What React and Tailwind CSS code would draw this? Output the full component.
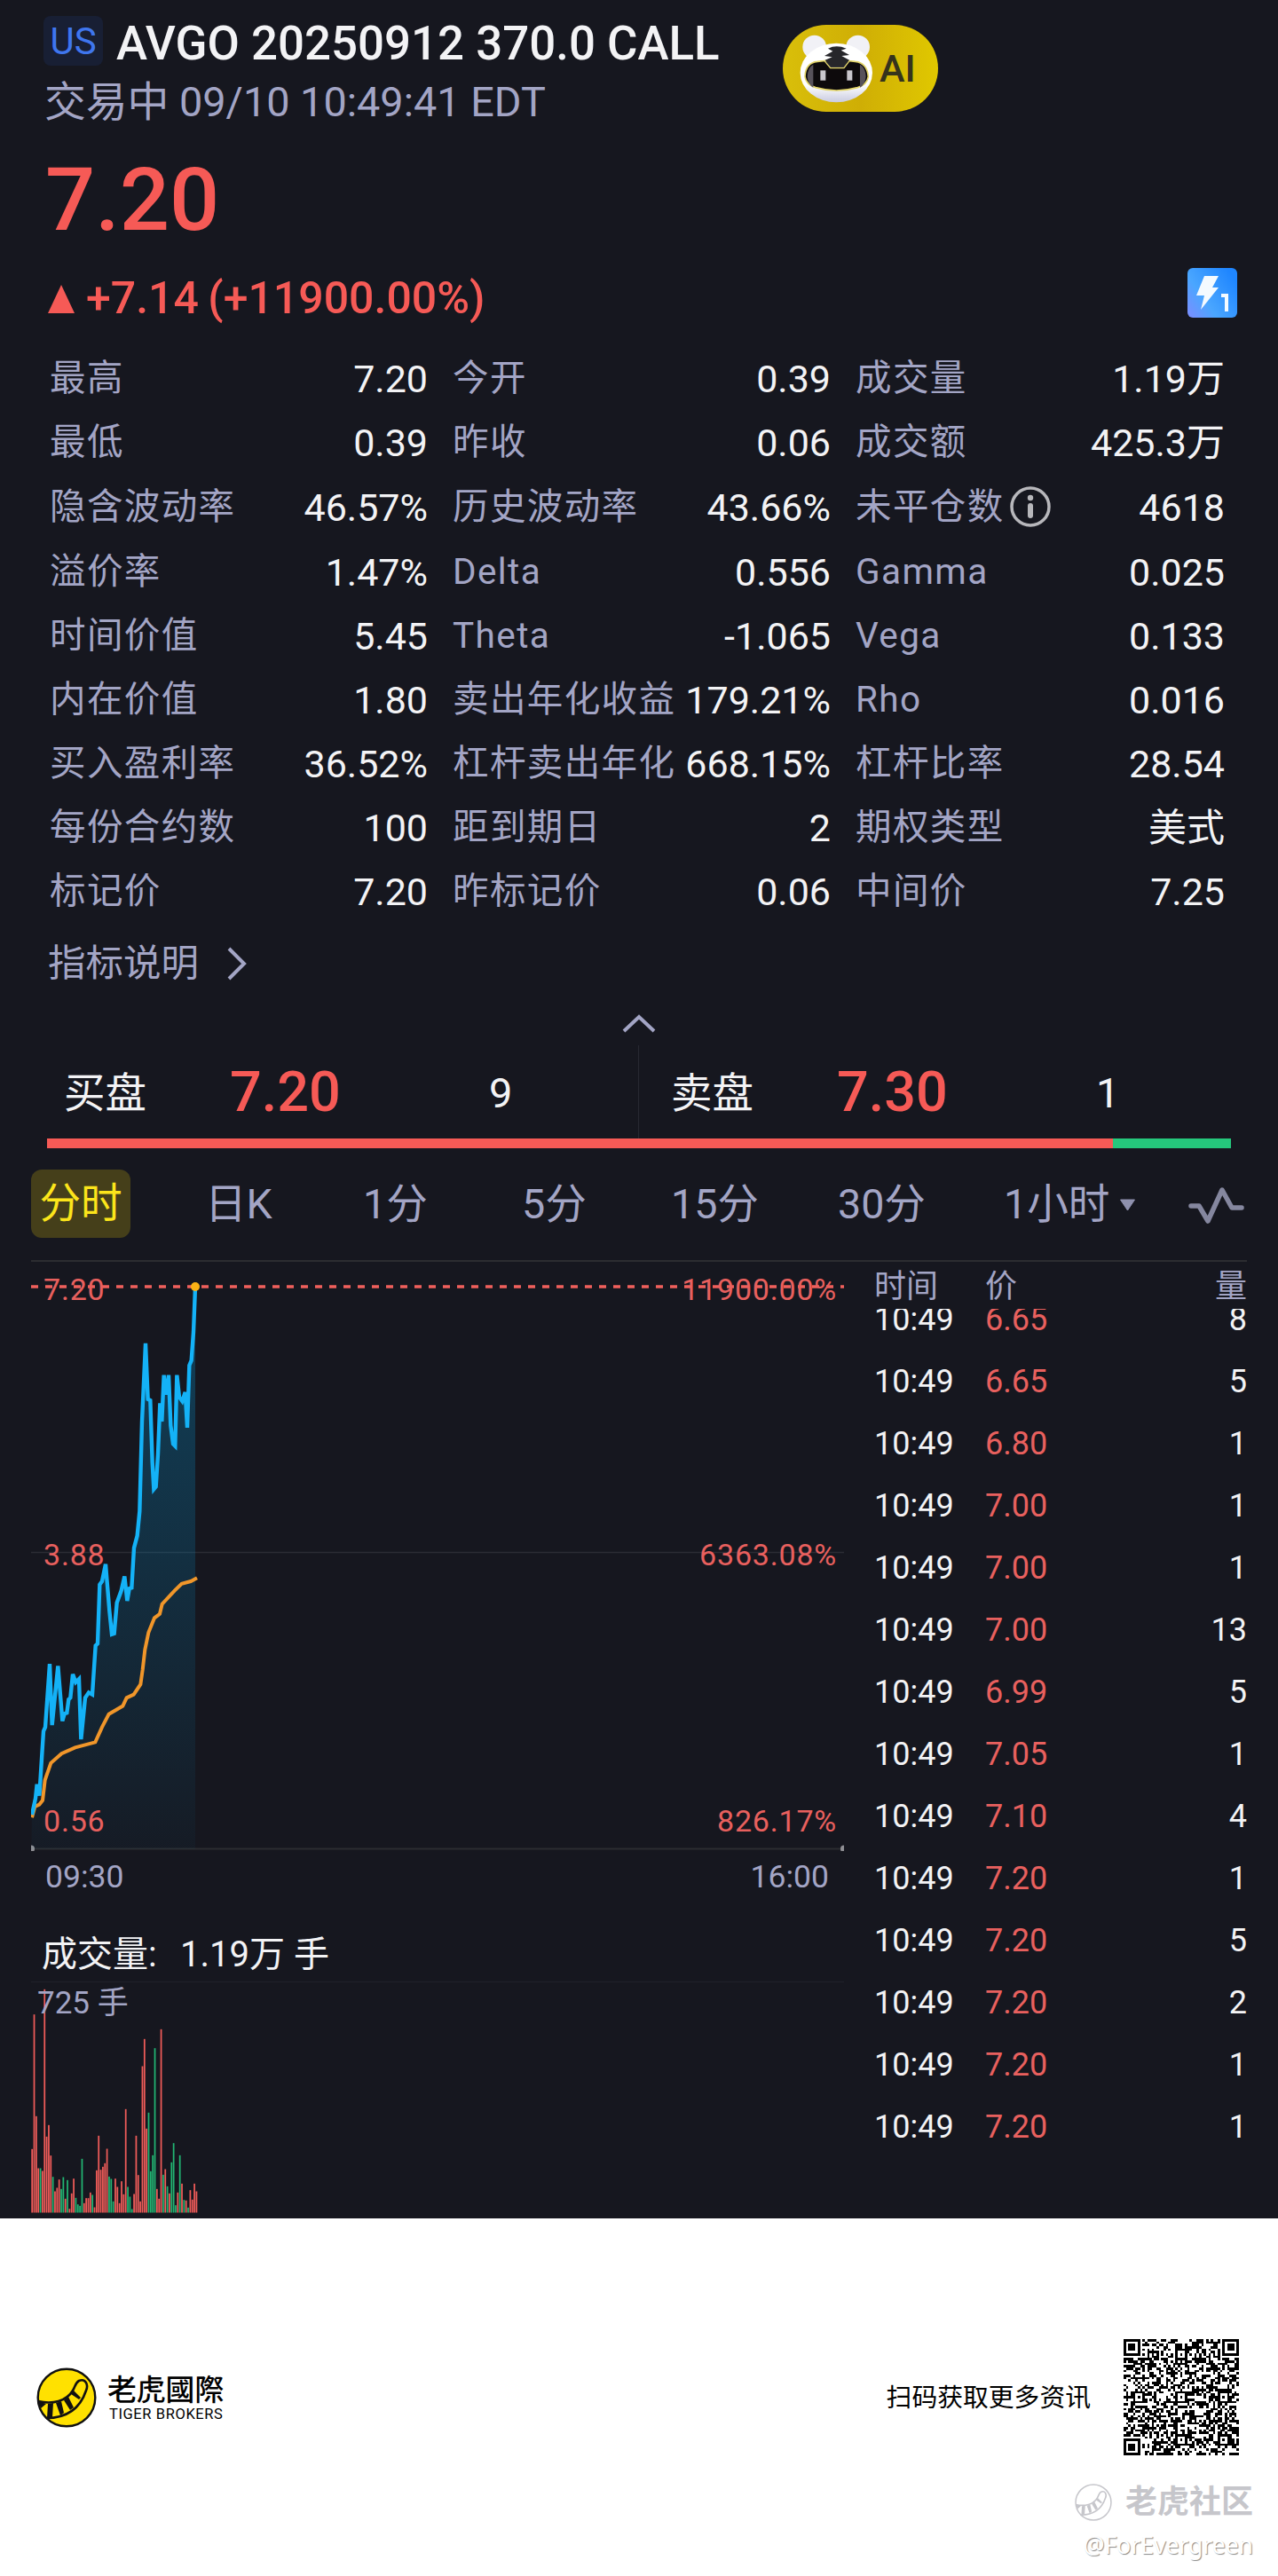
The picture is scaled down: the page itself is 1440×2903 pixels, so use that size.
const STATS = [
  [['最高', '7.20'], ['今开', '0.39'], ['成交量', '1.19万']],
  [['最低', '0.39'], ['昨收', '0.06'], ['成交额', '425.3万']],
  [['隐含波动率', '46.57%'], ['历史波动率', '43.66%'], ['未平仓数', '4618', true]],
  [['溢价率', '1.47%'], ['Delta', '0.556'], ['Gamma', '0.025']],
  [['时间价值', '5.45'], ['Theta', '-1.065'], ['Vega', '0.133']],
  [['内在价值', '1.80'], ['卖出年化收益', '179.21%'], ['Rho', '0.016']],
  [['买入盈利率', '36.52%'], ['杠杆卖出年化', '668.15%'], ['杠杆比率', '28.54']],
  [['每份合约数', '100'], ['距到期日', '2'], ['期权类型', '美式']],
  [['标记价', '7.20'], ['昨标记价', '0.06'], ['中间价', '7.25']],
];

const TRADES = [
  ['6.65', 8], ['6.65', 5], ['6.80', 1], ['7.00', 1], ['7.00', 1], ['7.00', 13], ['6.99', 5],
  ['7.05', 1], ['7.10', 4], ['7.20', 1], ['7.20', 5], ['7.20', 2], ['7.20', 1], ['7.20', 1],
];

// chart space: x is 1/3 px, y is 1/2.178 px
const PRICE =
  '108,1405 120,1365 125,1330 133,1358 147,1200 153,1190 168,1035 176,1185 196,1040 211,1175 218,1157 226,1155 232,1122 238,1118 246,1060 256,1080 267,1072 274,1220 288,1118 300,1105 312,1110 323,990 330,985 337,840 345,832 357,790 370,905 378,962 386,960 395,885 410,855 421,820 430,880 437,850 445,848 453,750 464,720 472,660 480,440 492,248 500,385 508,388 515,540 520,606 527,600 534,520 541,395 547,440 554,326 560,370 564,370 570,326 577,450 585,495 592,500 598,326 606,380 616,390 626,368 633,455 640,302 647,290 654,220 660,110';
const AVERAGE =
  '108,1412 118,1385 133,1380 144,1370 152,1320 172,1278 208,1255 254,1240 322,1227 345,1190 368,1158 415,1138 428,1118 452,1110 475,1085 482,1050 490,1000 502,958 522,922 540,912 548,888 590,855 614,838 645,832 666,824';

// one bar a minute, r = up, g = down
const VOLUME =
  'r215 r670 r326 r150 g150 r141 r755 r257 r296 r193 g121 r72 r84 r112 g80 g120 r47 g110 r13 r65 r115 g50 g28 g23 g182 r32 r49 r49 r68 g60 r18 r143 r260 r145 r155 r167 r216 g122 g114 g38 r115 r87 r32 r106 r62 r350 g87 g54 g12 r63 r260 r127 r38 r495 r587 r284 g338 g140 g194 g556 r80 r47 r620 g128 r147 g89 r65 g170 g235 g25 r68 g194 r98 g43 r41 g17 r76 r44 r98 r72'.split(' ');

const QR_SIZE = 49;

function buildQr() {
  let seed = 20250912;
  const rand = () => {
    seed = (seed * 1103515245 + 12345) % 2147483648;
    return seed / 2147483648;
  };
  const square = (x, y, cx, cy, max) => {
    const d = Math.max(Math.abs(x - cx), Math.abs(y - cy));
    return d <= max ? d : -1;
  };
  let d = '';
  for (let y = 0; y < QR_SIZE; y++) {
    for (let x = 0; x < QR_SIZE; x++) {
      let on = rand() > 0.5;
      if (x === 6 || y === 6) on = (x + y) % 2 === 0;
      for (const [cx, cy] of [[24, 6], [6, 24], [24, 24], [42, 24], [24, 42], [42, 42]]) {
        const r = square(x, y, cx, cy, 2);
        if (r >= 0) on = r !== 1;
      }
      for (const [cx, cy] of [[3, 3], [45, 3], [3, 45]]) {
        const r = square(x, y, cx, cy, 4);
        if (r >= 0) on = r !== 2 && r !== 4;
      }
      if (on) d += `M${x} ${y}h1v1h-1z`;
    }
  }
  return d;
}

const QR_PATH = buildQr();

function TigerBot() {
  return (
    <svg className="w-[84px] h-[78px]" viewBox="0 0 252 234">
      <defs>
        <linearGradient id="bot" x1="0" y1="0" x2="0" y2="1">
          <stop offset="0.7" stopColor="#ffffff" />
          <stop offset="1" stopColor="#c9cbe0" />
        </linearGradient>
      </defs>
      <circle cx="50" cy="45" r="40" fill="#f1f1f6" />
      <circle cx="197" cy="45" r="40" fill="#f1f1f6" />
      <ellipse cx="124" cy="132" rx="122" ry="100" fill="url(#bot)" />
      <path d="M18 145 Q20 98 60 94 Q124 86 188 94 Q228 98 232 145 Q228 172 196 182 Q124 202 54 182 Q22 172 18 145z" fill="#0d0a0c" stroke="#e3d56a" strokeWidth="5" />
      <path d="M26 144q2-30 20-40v78q-18-10-20-38zM224 144q-2-30-20-40v78q18-10 20-38z" fill="#57525a" />
      <path d="M84 92 L104 116 H150 L168 92z" fill="#35353a" stroke="#e3d56a" strokeWidth="4" />
      <path d="M96 50q28-14 62 0l-18 6 28 16-26 3 26 14-20 22h-42l-20-22 24-10-26-4 28-16z" fill="#26262a" />
      <rect x="70" y="124" width="18" height="34" fill="#c9c7cd" />
      <rect x="160" y="124" width="18" height="34" fill="#c9c7cd" />
    </svg>
  );
}

function Header() {
  return (
    <div className="flex h-[390px] pl-[49px]">
      <div className="w-[833px] shrink-0 flex flex-col">
        <div className="mt-[18px] h-[56px] flex items-center">
          <span className="w-[67px] h-[56px] rounded-[8px] bg-[#181f34] text-[#3f76ee] text-[42px] leading-[58px] text-center">US</span>
          <span className="ml-[15px] pt-[6px] text-[52.8px] leading-[56px] font-medium text-[#f3f3f5] whitespace-nowrap">AVGO 20250912 370.0 CALL</span>
        </div>
        <p className="mt-[11px] ml-[1px] text-[46.8px] leading-[60px] text-[#a3a5c5]">交易中 09/10 10:49:41 EDT</p>
        <p className="mt-[30px] ml-[2px] text-[99px] leading-[100px] font-medium text-[#f65a56]">7.20</p>
        <div className="mt-[33px] ml-[5px] flex items-center h-[56px]">
          <svg className="w-[30px] h-[32px] mt-[2px]" viewBox="0 0 30 32"><path d="M15 0 30 32H0z" fill="#f65a56" /></svg>
          <span className="ml-[13px] text-[50px] leading-[56px] font-medium text-[#f65a56] whitespace-nowrap [word-spacing:-2px]">+7.14 (+11900.00%)</span>
        </div>
      </div>
      <div className="grow flex flex-col justify-between pr-[46px] pb-[32px] pt-[28px]">
        <div className="w-[175px] h-[98px] rounded-[49px] bg-linear-to-r from-[#d9bf0a] via-[#cfae05] to-[#e0c800] flex items-center pl-[19px]">
          <TigerBot />
          <span className="ml-[6px] text-[43px] leading-[48px] font-medium text-[#35331c]">AI</span>
        </div>
        <svg className="self-end w-[56px] h-[56px]" viewBox="0 0 56 56">
          <defs>
            <linearGradient id="l1" x1="0" y1="1" x2="1" y2="0.3">
              <stop offset="0" stopColor="#7d8dff" />
              <stop offset="0.4" stopColor="#4aa6ff" />
              <stop offset="1" stopColor="#1f86ff" />
            </linearGradient>
          </defs>
          <rect width="56" height="56" rx="6" fill="url(#l1)" />
          <path d="M19 9H35L28 22H35L15 47L19 31H10z" fill="#f4faff" />
          <path d="M38 29h8v20h-4V33h-4z" fill="#f4faff" />
        </svg>
      </div>
    </div>
  );
}

function Stat({ item, last }) {
  const [label, value, info] = item;
  return (
    <div className={`flex items-center justify-between ${last ? 'w-[416px]' : 'w-[426px]'}`}>
      <span className="flex items-center text-[40.5px] leading-[70px] tracking-[1.4px] text-[#a3a5c5] whitespace-nowrap">
        {label}
        {info && (
          <svg className="w-[46px] h-[46px] ml-[6px]" viewBox="0 0 46 46">
            <circle cx="23" cy="23" r="21" fill="none" stroke="#b7b7bb" strokeWidth="3.5" />
            <circle cx="23" cy="13" r="3.2" fill="#b7b7bb" />
            <rect x="20" y="19" width="6" height="17" rx="3" fill="#b7b7bb" />
          </svg>
        )}
      </span>
      <span className="pt-[1px] text-[43px] leading-[70px] text-[#f3f3f5] whitespace-nowrap">{value}</span>
    </div>
  );
}

function Stats() {
  return (
    <div className="pl-[56px]">
      {STATS.map((row, i) => (
        <div key={i} className={`flex gap-[28px] items-center ${i === 2 ? 'h-[74px]' : 'h-[72px]'}`}>
          {row.map((item, j) => <Stat key={item[0]} item={item} last={j === 2} />)}
        </div>
      ))}
      <div className="h-[91px] flex items-center">
        <span className="-ml-[2px] text-[42.5px] leading-[60px] text-[#a3a5c5]">指标说明</span>
        <svg className="w-[22px] h-[38px] ml-[32px]" viewBox="0 0 22 38"><path d="M2 2 19 19 2 36" fill="none" stroke="#a3a5c5" strokeWidth="4" /></svg>
      </div>
    </div>
  );
}

function Quote({ name, price, size }) {
  return (
    <div className="flex items-center h-full">
      <span className="w-[187px] pt-[2px] text-[46.5px] text-[#f3f3f5]">{name}</span>
      <span className="w-[292px] pt-[1px] text-[63px] font-medium text-[#f65a56]">{price}</span>
      <span className="pt-[3px] text-[47px] text-[#f3f3f5]">{size}</span>
    </div>
  );
}

function OrderBook() {
  return (
    <div>
      <div className="h-[47px] flex justify-center pt-[12px]">
        <svg className="w-[38px] h-[21px]" viewBox="0 0 38 21"><path d="M2 19 19 3 36 19" fill="none" stroke="#a3a5c5" strokeWidth="4" /></svg>
      </div>
      <div className="h-[105px] flex leading-[70px]">
        <div className="w-[720px] pl-[72px] border-r border-[#272832]"><Quote name="买盘" price="7.20" size="9" /></div>
        <div className="pl-[36px]"><Quote name="卖盘" price="7.30" size="1" /></div>
      </div>
      <div className="mx-[53px] h-[11px] flex">
        <div className="w-[90%] bg-[#f65a56]" />
        <div className="w-[10%] bg-[#25c87c]" />
      </div>
    </div>
  );
}

function Tabs() {
  return (
    <div className="mx-[35px] h-[128px] pt-[23px] border-b-2 border-[#2c2d31]">
      <div className="grid grid-cols-[196px_178px_179px_168px_188px_187px_207px_auto] items-center h-[77px] text-[46.6px] leading-[77px] text-[#a3a5c5]">
        <span className="w-[112px] h-[77px] rounded-[12px] bg-[#453f1a] text-[#fce51b] text-center">分时</span>
        <span className="pt-[2px]">日K</span>
        <span className="pt-[2px]">1分</span>
        <span className="pt-[2px]">5分</span>
        <span className="pt-[2px]">15分</span>
        <span className="pt-[2px]">30分</span>
        <span className="flex items-center pt-[2px]">
          1小时
          <svg className="w-[19px] h-[14px] ml-[11px]" viewBox="0 0 18 14"><path d="M1 1H17L9 13z" fill="#8f91ae" stroke="#8f91ae" strokeLinejoin="round" /></svg>
        </span>
        <svg className="w-[64px] h-[44px] mt-[4px]" viewBox="0 0 64 44">
          <path d="M4 22H13L23 39L39 4L50 24H61" fill="none" stroke="#85879f" strokeWidth="5.5" strokeLinecap="round" strokeLinejoin="round" />
        </svg>
      </div>
    </div>
  );
}

function PriceChart() {
  return (
    <div className="relative h-[664px] text-[34px] leading-[40px] tracking-[0.8px] text-[#e8605e]">
      <svg className="w-[916px] h-[664px]" viewBox="0 0 916 664">
        <defs>
          <linearGradient id="area" gradientUnits="userSpaceOnUse" x1="0" y1="50" x2="0" y2="1490">
            <stop offset="0" stopColor="#04a5e8" stopOpacity="0.3" />
            <stop offset="0.4" stopColor="#04a5e8" stopOpacity="0.2" />
            <stop offset="1" stopColor="#04a5e8" stopOpacity="0.03" />
          </linearGradient>
        </defs>
        <path d="M0 327.5H916" stroke="#2b2c34" strokeWidth="1.5" />
        <path d="M0 661.5H916" stroke="#2b2c30" strokeWidth="2" />
        <circle cx="0" cy="661.5" r="4" fill="#8f8f94" />
        <circle cx="916" cy="661.5" r="4" fill="#8f8f94" />
        <g transform="translate(-35 -22) scale(0.33333 0.45914)" fill="none">
          <polygon points={`106,1490 ${PRICE} 660,1490`} fill="url(#area)" />
          <polyline points={AVERAGE} stroke="#f0962a" strokeWidth="4" vectorEffect="non-scaling-stroke" />
          <polyline points={PRICE} stroke="#14b2f7" strokeWidth="4.4" vectorEffect="non-scaling-stroke" />
        </g>
        <path d="M0 28H916" stroke="#f0605c" strokeWidth="3.5" strokeDasharray="8 8" />
        <circle cx="185" cy="28" r="5" fill="#fbb215" />
      </svg>
      <div className="absolute inset-0 pl-[14px] pr-[8px] pt-[11px] flex flex-col">
        <div className="flex justify-between h-[299px]"><span>7.20</span><span>11900.00%</span></div>
        <div className="flex justify-between h-[300px]"><span>3.88</span><span>6363.08%</span></div>
        <div className="flex justify-between"><span>0.56</span><span>826.17%</span></div>
      </div>
    </div>
  );
}

function VolumeChart() {
  return (
    <div className="relative h-[260px] border-t border-[#20212a]">
      <svg className="w-[916px] h-[260px]" viewBox="0 0 916 260">
        {VOLUME.map((v, i) => {
          const h = Number(v.slice(1)) / 3;
          return <rect key={i} x={i * 2.345 + 0.3} y={259.5 - h} width="1.75" height={h} fill={v[0] === 'r' ? '#f05c59' : '#22b573'} />;
        })}
      </svg>
      <span className="absolute left-[7px] top-[4px] text-[35px] leading-[40px] text-[#a3a5c5]">725 手</span>
    </div>
  );
}

function Trades() {
  return (
    <div className="w-[420px] ml-[34px] text-[36px]">
      <div className="flex h-[53px] leading-[56px] text-[#a3a5c5]">
        <span className="w-[125px]">时间</span>
        <span>价</span>
        <span className="ml-auto">量</span>
      </div>
      <div className="h-[980px] overflow-hidden">
        <div className="-mt-[23px]">
          {TRADES.map(([price, qty], i) => (
            <div key={i} className="flex h-[70px] leading-[70px] text-[#f3f3f5]">
              <span className="w-[125px]">10:49</span>
              <span className="text-[#e8605e]">{price}</span>
              <span className="ml-auto">{qty}</span>
            </div>
          ))}
        </div>
      </div>
    </div>
  );
}

function TigerTail({ className, fill, stroke }) {
  return (
    <svg className={className} viewBox="0 0 68 68">
      <circle cx="34" cy="34" r="32.3" fill={fill} stroke={stroke} strokeWidth="2.4" />
      <path d="M2 38C18 42 34 38 41 26C44 21 44 17 48 15C55 12 59 19 56 26C50 44 36 57 11 57" fill="none" stroke={stroke} strokeWidth="2.6" />
      <path d="M2 38L11 41L5 46zM13 41L19 40L18 56L12 57zM22 40L28 38L31 51L27 54zM31 37L36 33L42 45L38 48zM39 30L42 26L50 34L48 36z" fill={stroke} />
    </svg>
  );
}

function Footer() {
  return (
    <div className="h-[403px] bg-white text-black">
      <div className="flex items-center pt-[136px] pl-[41px] pr-[44px] h-[267px]">
        <TigerTail className="w-[68px] h-[68px]" fill="#ffe100" stroke="#111111" />
        <div className="ml-[12px]">
          <p className="text-[32.8px] leading-[36px] font-medium font-['Noto_Sans_CJK_TC',sans-serif]">老虎國際</p>
          <p className="ml-[2px] mt-[2px] text-[16.5px] leading-[20px] tracking-[0.6px]">TIGER BROKERS</p>
        </div>
        <span className="ml-auto text-[28.8px] leading-[40px]">扫码获取更多资讯</span>
        <svg className="w-[130px] h-[131px] ml-[37px]" viewBox="0 0 49 49" preserveAspectRatio="none" shapeRendering="crispEdges">
          <path d={QR_PATH} fill="#000000" />
        </svg>
      </div>
      <div className="flex flex-col items-end pr-[28px] pt-[29px]">
        <div className="flex items-center h-[48px]">
          <TigerTail className="w-[42px] h-[42px]" fill="#ffffff" stroke="#c6c6cb" />
          <span className="ml-[15px] text-[36px] leading-[48px] font-bold text-[#c6c6cb]">老虎社区</span>
        </div>
        <p className="mt-[6px] text-[26.5px] leading-[36px] font-['Noto_Sans',sans-serif] text-white [text-shadow:1px_1px_1px_#8a8a8a]">@ForEvergreen</p>
      </div>
    </div>
  );
}

export default function App() {
  return (
    <div className="w-[1440px] font-[Roboto,'Noto_Sans_CJK_SC',sans-serif]">
      <div className="h-[2500px] bg-[#16171f] overflow-hidden">
        <Header />
        <Stats />
        <OrderBook />
        <Tabs />
        <div className="flex pl-[35px]">
          <div className="w-[916px]">
            <PriceChart />
            <div className="h-[58px] pl-[16px] pr-[17px] flex justify-between text-[35.5px] leading-[58px] text-[#a3a5c5]">
              <span>09:30</span>
              <span>16:00</span>
            </div>
            <div className="mt-[29px] h-[60px] pl-[12px] flex text-[40px] leading-[60px] text-[#f3f3f5]">
              <span className="w-[156px]">成交量:</span>
              <span>1.19万 手</span>
            </div>
            <VolumeChart />
          </div>
          <Trades />
        </div>
      </div>
      <Footer />
    </div>
  );
}
